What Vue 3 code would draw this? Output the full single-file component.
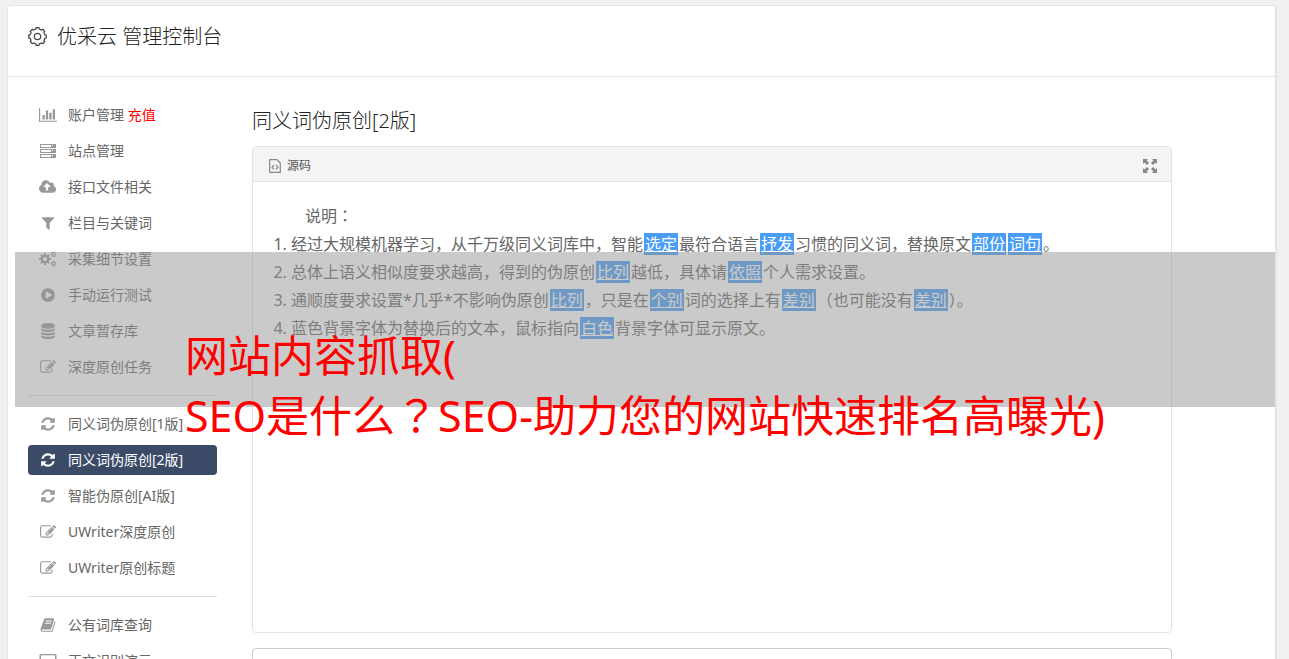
<script setup>
const icons = {
  chart: { box: '0 0 2048 1792', d: 'M640 896v512h-256v-512h256zm384-512v1024h-256v-1024h256zm1024 1152v128h-2048v-1536h128v1408h1920zm-640-896v768h-256v-768h256zm384-384v1152h-256v-1152h256z' },
  cloud: { box: '0 0 1920 1792', d: 'M1280 864q0-14-9-23l-352-352q-9-9-23-9t-23 9l-351 351q-10 12-10 24 0 14 9 23t23 9h224v352q0 13 9.5 22.5t22.5 9.5h192q13 0 22.5-9.5t9.5-22.5v-352h224q13 0 22.5-9.5t9.5-22.5zm640 288q0 159-112.5 271.5t-271.5 112.5h-1088q-185 0-316.5-131.5t-131.5-316.5q0-130 70-240t188-165q-2-30-2-43 0-212 150-362t362-150q156 0 285.5 87t188.5 231q71-62 166-62 106 0 181 75t75 181q0 76-41 138 130 31 213.5 135.5t83.5 238.5z' },
  filter: { box: '0 0 1792 1792', d: 'M1595 295q17 41-14 70l-493 493v742q0 42-39 59-13 5-25 5-27 0-45-19l-256-256q-19-19-19-45v-486l-493-493q-31-29-14-70 17-39 59-39h1280q42 0 59 39z' },
  play: { box: '0 0 1792 1792', d: 'M896 128q209 0 385.5 103t279.5 279.5 103 385.5-103 385.5-279.5 279.5-385.5 103-385.5-103-279.5-279.5-103-385.5 103-385.5 279.5-279.5 385.5-103zm384 823q32-18 32-55t-32-55l-544-320q-31-19-64-1-32 19-32 56v640q0 37 32 56 16 8 32 8 17 0 32-9z' },
  database: { box: '0 0 1792 1792', d: 'M896 768q237 0 443-43t325-127v170q0 69-103 128t-280 93.5-385 34.5-385-34.5-280-93.5-103-128v-170q119 84 325 127t443 43zm0 768q237 0 443-43t325-127v170q0 69-103 128t-280 93.5-385 34.5-385-34.5-280-93.5-103-128v-170q119 84 325 127t443 43zm0-384q237 0 443-43t325-127v170q0 69-103 128t-280 93.5-385 34.5-385-34.5-280-93.5-103-128v-170q119 84 325 127t443 43zm0-1152q208 0 385 34.5t280 93.5 103 128v128q0 69-103 128t-280 93.5-385 34.5-385-34.5-280-93.5-103-128v-128q0-69 103-128t280-93.5 385-34.5z' },
  edit: { box: '0 0 1792 1792', d: 'M888 1184l116-116-152-152-116 116v56h96v96h56zm440-720q-16-16-33 1l-350 350q-17 17-1 33t33-1l350-350q17-17 1-33zm80 594v190q0 119-84.5 203.5t-203.5 84.5h-832q-119 0-203.5-84.5t-84.5-203.5v-832q0-119 84.5-203.5t203.5-84.5h832q63 0 117 25 15 7 18 23 3 17-9 29l-49 49q-14 14-32 8-23-6-45-6h-832q-66 0-113 47t-47 113v832q0 66 47 113t113 47h832q66 0 113-47t47-113v-126q0-13 9-22l64-64q15-15 35-7t20 29zm-96-738l288 288-672 672h-288v-288zm444 132l-92 92-288-288 92-92q28-28 68-28t68 28l152 152q28 28 28 68t-28 68z' },
  refresh: { box: '0 0 1792 1792', d: 'M1639 1056q0 5-1 7-64 268-268 434.5t-478 166.5q-146 0-282.5-55t-243.5-157l-129 129q-19 19-45 19t-45-19-19-45v-448q0-26 19-45t45-19h448q26 0 45 19t19 45-19 45l-137 137q71 66 161 102t187 36q134 0 250-65t186-179q11-17 53-117 8-23 30-23h192q13 0 22.5 9.5t9.5 22.5zm25-800v448q0 26-19 45t-45 19h-448q-26 0-45-19t-19-45 19-45l138-138q-148-137-349-137-134 0-250 65t-186 179q-11 17-53 117-8 23-30 23h-199q-13 0-22.5-9.5t-9.5-22.5v-7q65-268 270-434.5t480-166.5q146 0 284 55.5t245 156.5l130-129q19-19 45-19t45 19 19 45z' },
  book: { box: '0 0 1792 1792', d: 'M1703 478q40 57 18 129l-275 906q-19 64-76.5 107.5t-122.5 43.5h-923q-77 0-148.5-53.5t-99.5-131.5q-24-67-2-127 0-4 3-27t4-37q1-8-3-21.5t-3-19.5q2-11 8-21t16.5-23.5 16.5-23.5q23-38 45-91.5t30-91.5q3-10 .5-30t-.5-28q3-11 17-28t17-23q21-36 42-92t25-90q1-9-2.5-32t.5-28q4-13 22-30.5t22-22.5q19-26 42.5-84.5t27.5-96.5q1-8-3-25.5t-2-26.5q2-8 9-18t18-23 17-21q8-12 16.5-30.5t15-35 16-36 19.5-32 26.5-23.5 36-11.5 47.5 5.5l-1 3q38-9 51-9h761q74 0 114 56t18 130l-274 906q-36 119-71.5 153.5t-128.5 34.5h-869q-27 0-38 15-11 16-1 43 24 70 144 70h923q29 0 56-15.5t35-41.5l300-987q7-22 5-57 38 15 59 43zm-1064 2q-4 13 2 22.5t20 9.5h608q13 0 25.5-9.5t16.5-22.5l21-64q4-13-2-22.5t-20-9.5h-608q-13 0-25.5 9.5t-16.5 22.5zm-83 256q-4 13 2 22.5t20 9.5h608q13 0 25.5-9.5t16.5-22.5l21-64q4-13-2-22.5t-20-9.5h-608q-13 0-25.5 9.5t-16.5 22.5z' },
  desktop: { box: '0 0 18 16', d: 'M2 1h14a1.500 1.500 0 0 1 1.500 1.500v9a1.500 1.500 0 0 1-1.500 1.500h-5v2h2v1H5v-1h2v-2H2a1.500 1.500 0 0 1-1.500-1.500v-9A1.500 1.500 0 0 1 2 1zm0 1.300v8h14v-8z' },
  server: { box: '0 0 16 16', d: 'M0 1h16v4H0zM1 2v2h10V2zM12 2v1h1V2zM0 6h16v4H0zM1 7v2h10V7zM12 7v1h1V7zM0 11h16v4H0zM1 12v2h10v-2zM12 12v1h1v-1z' },
}

// Closed outline of a cog: each tooth rises from radius r to radius R.
function cog(cx, cy, r, R, hole, n) {
  const step = (Math.PI * 2) / n
  const at = (rad, a) => `${(cx + rad * Math.cos(a)).toFixed(2)} ${(cy + rad * Math.sin(a)).toFixed(2)}`
  let d = ''
  for (let i = 0; i < n; i++) {
    const a = i * step
    d += `${i ? 'L' : 'M'}${at(r, a - step * 0.3)}L${at(R, a - step * 0.2)}L${at(R, a + step * 0.2)}L${at(r, a + step * 0.3)}`
  }
  return `${d}ZM${cx - hole} ${cy}a${hole} ${hole} 0 1 0 ${hole * 2} 0a${hole} ${hole} 0 1 0 ${-hole * 2} 0Z`
}
icons.cogs = { box: '0 0 18 16', d: cog(6, 8, 4.4, 6, 2, 8) + cog(14.5, 3.4, 2.1, 3, 1.1, 6) + cog(14.5, 12.6, 2.1, 3, 1.1, 6) }
const headerCog = cog(9, 9, 7.2, 8.4, 3, 8)

const groups = [
  [
    { icon: 'chart', text: '账户管理', extra: '充值' },
    { icon: 'server', text: '站点管理' },
    { icon: 'cloud', text: '接口文件相关' },
    { icon: 'filter', text: '栏目与关键词' },
    { icon: 'cogs', text: '采集细节设置' },
    { icon: 'play', text: '手动运行测试' },
    { icon: 'database', text: '文章暂存库' },
    { icon: 'edit', text: '深度原创任务' },
  ],
  [
    { icon: 'refresh', text: '同义词伪原创[1版]' },
    { icon: 'refresh', text: '同义词伪原创[2版]', active: true },
    { icon: 'refresh', text: '智能伪原创[AI版]' },
    { icon: 'edit', text: 'UWriter深度原创' },
    { icon: 'edit', text: 'UWriter原创标题' },
  ],
  [
    { icon: 'book', text: '公有词库查询' },
    { icon: 'desktop', text: '正文识别演示' },
  ],
]

// Odd-numbered pieces are replaced words.
const notes = [
  '经过大规模机器学习，从千万级同义词库中，智能|选定|最符合语言|抒发|习惯的同义词，替换原文|部份||词句|。',
  '总体上语义相似度要求越高，得到的伪原创|比列|越低，具体请|依照|个人需求设置。',
  '通顺度要求设置*几乎*不影响伪原创|比列|，只是在|个别|词的选择上有|差别|（也可能没有|差别|）。',
  '蓝色背景字体为替换后的文本，鼠标指向|白色|背景字体可显示原文。',
].map((line) => line.split('|'))
</script>

<template>
  <div class="page">
    <div class="card">
      <header class="top">
        <svg class="top-icon" viewBox="0 0 18 18" aria-hidden="true"><path :d="headerCog" /></svg>
        <h1>优采云 管理控制台</h1>
      </header>
      <div class="body">
        <nav class="side">
          <ul v-for="(group, g) in groups" :key="g">
            <li v-for="item in group" :key="item.text">
              <a href="#" :class="{ active: item.active }">
                <span class="slot"><svg class="icon" :viewBox="icons[item.icon].box" aria-hidden="true"><path fill-rule="evenodd" :d="icons[item.icon].d" /></svg></span>
                <span>{{ item.text }} <em v-if="item.extra">{{ item.extra }}</em></span>
              </a>
            </li>
          </ul>
        </nav>
        <main>
          <h2>同义词伪原创[2版]</h2>
          <section class="panel">
            <div class="bar">
              <button type="button" class="source">
                <svg class="file" viewBox="0 0 12 14" aria-hidden="true">
                  <path d="M1 .7h7l3.300 3.300v9.300H.7V.7z" />
                  <path d="M5 6 3 8.200l2 2.200M7 6l2 2.200-2 2.200" />
                </svg>
                源码
              </button>
              <button type="button" class="expand" aria-label="全屏">
                <svg viewBox="0 0 14 14" aria-hidden="true">
                  <path d="M0 0h5L3.600 1.400 6 4 4 6 1.400 3.600 0 5zM14 0v5l-1.400-1.400L10 6 8 4l2.400-2.600L9 0zM0 14V9l1.400 1.400L4 8l2 2-2.400 2.600L5 14zM14 14H9l1.400-1.400L8 10l2-2 2.600 2.400L14 9z" />
                </svg>
              </button>
            </div>
            <div class="doc">
              <p>说明<span class="mid">：</span></p>
              <ol>
                <li v-for="(parts, n) in notes" :key="n">
                  <template v-for="(part, i) in parts" :key="i"><u v-if="i % 2">{{ part }}</u><template v-else>{{ part }}</template></template>
                </li>
              </ol>
            </div>
          </section>
          <textarea class="result" aria-label="结果"></textarea>
        </main>
      </div>
    </div>
    <div class="banner">
      <p>网站内容抓取(<br>SEO是什么<span class="mid">？</span>SEO-助力您的网站快速排名高曝光)</p>
    </div>
  </div>
</template>

<style>
body {
  margin: 0;
  background: #f0f0f0;
}
</style>

<style scoped>
.page {
  position: relative;
  box-sizing: border-box;
  height: 100vh;
  overflow: hidden;
  padding: 5px 12px 0 7px;
  color: #666;
  font: 400 14px/20px "Noto Sans", "Noto Sans CJK SC", sans-serif;
}
.card {
  background: #fff;
  border: 1px solid #e4e4e4;
  border-right-width: 2px;
  border-radius: 4px;
}
.top {
  display: flex;
  align-items: center;
  gap: 10px;
  height: 62px;
  padding: 0 20px 8px;
  border-bottom: 1px solid #e4e4e4;
}
h1, h2 {
  margin: 0;
  color: #222;
  font-size: 20px;
  font-weight: 300;
  line-height: 28px;
}
.top-icon {
  width: 19px;
  height: 19px;
  margin-bottom: 2px;
  fill: none;
  stroke: #444;
  stroke-width: 1.2;
}
.body {
  display: grid;
  grid-template-columns: 189px 1fr;
  gap: 35px;
  padding: 23px 103px 0 20px;
}
ul, ol {
  margin: 0;
  padding: 0;
}
ul {
  display: grid;
  gap: 6px;
  list-style: none;
}
ul + ul {
  margin-top: 13px;
  padding-top: 13px;
  border-top: 1px solid #ddd;
}
.side a {
  display: flex;
  align-items: center;
  gap: 10px;
  height: 30px;
  padding-left: 10px;
  border-radius: 4px;
  color: inherit;
  text-decoration: none;
  white-space: nowrap;
}
.side a.active {
  background: #3b4b67;
  color: #fff;
}
.side em {
  color: #f00;
  font-style: normal;
}
.slot {
  display: flex;
  justify-content: center;
  width: 20px;
}
.icon {
  height: 16px;
  fill: #999;
}
.active .icon {
  fill: #fff;
}
main {
  min-width: 0;
  padding-top: 7px;
}
.panel {
  box-sizing: border-box;
  min-height: 487px;
  margin-top: 11px;
  border: 1px solid #e4e4e4;
  border-radius: 4px;
}
.bar {
  display: flex;
  align-items: center;
  justify-content: space-between;
  box-sizing: border-box;
  height: 35px;
  padding: 3px 14px 0 16px;
  background: #f4f4f4;
  border-bottom: 1px solid #e4e4e4;
}
button {
  display: flex;
  align-items: center;
  padding: 0;
  border: 0;
  background: none;
  color: #555;
  font: inherit;
  font-size: 12px;
}
.source {
  gap: 6px;
}
.file {
  width: 12px;
  height: 14px;
  fill: none;
  stroke: #888;
  stroke-width: 1.2;
}
.expand svg {
  width: 14px;
  height: 14px;
  fill: #888;
}
.doc {
  padding: 20px;
  font-size: 16px;
  line-height: 28px;
}
.doc p {
  margin: 0;
  text-indent: 2em;
}
ol {
  padding-left: 18px;
}
.mid {
  font-family: "Noto Sans CJK TC", sans-serif;
  line-height: 1;
}
u {
  margin: 0 1px;
  padding: 0 1px;
  background: #499df5;
  color: #fff;
}
.result {
  display: block;
  box-sizing: border-box;
  width: 100%;
  height: 120px;
  margin-top: 15px;
  border: 1px solid #ccc;
  border-radius: 4px;
  resize: none;
}
.banner {
  position: absolute;
  top: 252px;
  left: 15px;
  right: 14px;
  height: 155px;
  background: rgba(150, 150, 150, 0.5);
}
.banner p {
  margin: 74px 0 0 170px;
  color: #f00;
  font-size: 43px;
  line-height: 60px;
  white-space: nowrap;
}
</style>
